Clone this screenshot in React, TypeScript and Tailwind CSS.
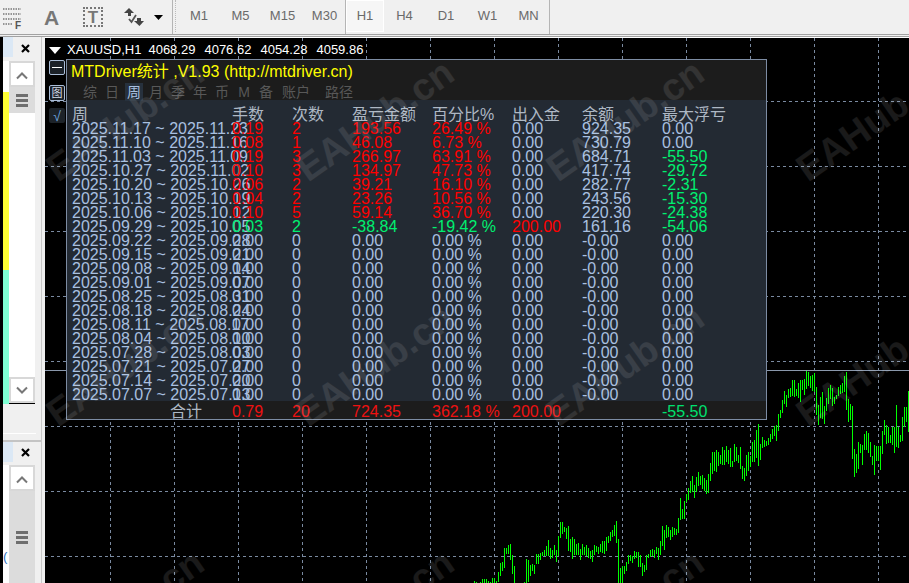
import React from 'react';

type Row = { week: string; lots: string; count: string; pl: string; pct: string; io: string; bal: string; dd: string };

const red = 'text-[#ff0000]';
const green = 'text-[#00f070]';
const steel = 'text-[#a9c0e0]';

const zero = { lots: '0.00', count: '0', pl: '0.00', pct: '0.00 %', io: '0.00', bal: '-0.00', dd: '0.00' };

const rows: Row[] = [
  { week: '2025.11.17 ~ 2025.11.23', lots: '0.19', count: '2', pl: '193.56', pct: '26.49 %', io: '0.00', bal: '924.35', dd: '0.00' },
  { week: '2025.11.10 ~ 2025.11.16', lots: '0.08', count: '1', pl: '46.08', pct: '6.73 %', io: '0.00', bal: '730.79', dd: '0.00' },
  { week: '2025.11.03 ~ 2025.11.09', lots: '0.19', count: '3', pl: '266.97', pct: '63.91 %', io: '0.00', bal: '684.71', dd: '-55.50' },
  { week: '2025.10.27 ~ 2025.11.02', lots: '0.10', count: '3', pl: '134.97', pct: '47.73 %', io: '0.00', bal: '417.74', dd: '-29.72' },
  { week: '2025.10.20 ~ 2025.10.26', lots: '0.06', count: '2', pl: '39.21', pct: '16.10 %', io: '0.00', bal: '282.77', dd: '-2.31' },
  { week: '2025.10.13 ~ 2025.10.19', lots: '0.04', count: '2', pl: '23.26', pct: '10.56 %', io: '0.00', bal: '243.56', dd: '-15.30' },
  { week: '2025.10.06 ~ 2025.10.12', lots: '0.10', count: '5', pl: '59.14', pct: '36.70 %', io: '0.00', bal: '220.30', dd: '-24.38' },
  { week: '2025.09.29 ~ 2025.10.05', lots: '0.03', count: '2', pl: '-38.84', pct: '-19.42 %', io: '200.00', bal: '161.16', dd: '-54.06' },
  { week: '2025.09.22 ~ 2025.09.28', ...zero },
  { week: '2025.09.15 ~ 2025.09.21', ...zero },
  { week: '2025.09.08 ~ 2025.09.14', ...zero },
  { week: '2025.09.01 ~ 2025.09.07', ...zero },
  { week: '2025.08.25 ~ 2025.08.31', ...zero },
  { week: '2025.08.18 ~ 2025.08.24', ...zero },
  { week: '2025.08.11 ~ 2025.08.17', ...zero },
  { week: '2025.08.04 ~ 2025.08.10', ...zero },
  { week: '2025.07.28 ~ 2025.08.03', ...zero },
  { week: '2025.07.21 ~ 2025.07.27', ...zero },
  { week: '2025.07.14 ~ 2025.07.20', ...zero },
  { week: '2025.07.07 ~ 2025.07.13', ...zero },
];

// sign colour for a cell: profit red, loss green, zero steel
const tone = (v: string) => {
  const n = parseFloat(v);
  if (n > 0) return red;
  if (n < 0) return green;
  return steel;
};

// [x, top, bottom] read off 3x crops, x0/y0 is the crop origin
const seg = (x0: number, y0: number, bars: number[][]) =>
  bars.map(([z, t, b]) => `M${x0 + z / 3 + 0.5} ${y0 + t / 3}V${y0 + b / 3}`).join('');

// the stretch between crops, y already in page pixels
const middle = [
  [0, 450, 472], [6, 452, 466], [12, 455, 464], [18, 447, 465], [24, 450, 465], [30, 446, 462], [36, 450, 464], [42, 448, 467],
  [48, 461, 467], [54, 444, 462], [60, 447, 461], [66, 455, 463], [72, 447, 469], [78, 466, 479], [84, 468, 481], [90, 455, 476],
  [96, 452, 471], [102, 456, 467], [108, 442, 462], [114, 440, 462], [120, 430, 458], [126, 424, 466],
].map(([z, t, b]) => [z, t * 3, b * 3]);

const candles =
  seg(470, 500, [
    [12, 243, 270], [18, 246, 270], [30, 247, 270], [36, 238, 270], [42, 237, 270], [48, 237, 270], [54, 242, 270], [60, 246, 270],
    [66, 234, 270], [72, 235, 270], [78, 243, 270], [84, 216, 246], [90, 189, 228], [96, 186, 213], [102, 144, 204], [108, 144, 162],
    [114, 135, 162], [120, 132, 180], [126, 165, 222], [132, 198, 270], [162, 246, 270], [168, 177, 270], [174, 180, 246], [180, 195, 228],
    [186, 192, 213], [192, 195, 222], [198, 162, 192], [204, 162, 192], [210, 159, 180], [216, 156, 168], [222, 150, 168], [228, 138, 168],
    [234, 120, 168], [240, 144, 177], [246, 150, 174], [252, 135, 165], [258, 150, 186], [264, 108, 168], [270, 66, 114], [276, 66, 102],
    [282, 81, 96], [288, 84, 117], [294, 78, 153], [300, 117, 156], [306, 111, 177], [312, 117, 165], [318, 132, 165], [324, 129, 165],
    [330, 147, 180], [336, 132, 165], [342, 141, 165], [348, 135, 168], [354, 144, 174], [360, 153, 177], [366, 150, 186], [372, 135, 165],
    [378, 138, 156], [384, 141, 162], [390, 132, 156], [396, 123, 159], [402, 123, 162], [408, 111, 153], [414, 108, 129], [420, 96, 123],
    [426, 90, 111], [432, 75, 108], [438, 63, 129], [444, 117, 270],
  ]) +
  seg(620, 460, [
    [0, 324, 369], [6, 318, 369], [12, 318, 342], [18, 306, 333], [24, 285, 312], [30, 285, 303], [36, 288, 309], [42, 273, 297],
    [48, 276, 294], [54, 276, 321], [60, 285, 321], [66, 309, 348], [72, 315, 336], [78, 285, 330], [84, 282, 294], [90, 270, 291],
    [96, 267, 288], [102, 270, 294], [108, 261, 282], [114, 264, 300], [120, 243, 285], [126, 198, 258], [132, 210, 270], [138, 195, 234],
    [144, 201, 231], [150, 210, 240], [156, 201, 231], [162, 204, 225], [168, 207, 225], [174, 174, 219], [180, 114, 180], [186, 147, 177],
    [192, 123, 177], [198, 102, 126], [204, 84, 120], [210, 63, 99], [216, 48, 96], [222, 75, 114], [228, 51, 96], [234, 36, 78],
    [240, 48, 75], [246, 45, 87], [252, 54, 93], [258, 60, 102], [264, 42, 99], [270, 9, 63], [276, -24, 42], [282, -24, 33],
  ]) +
  seg(716, 0, middle) +
  seg(760, 365, [
    [0, 237, 285], [6, 216, 249], [12, 225, 246], [18, 228, 243], [24, 219, 240], [30, 207, 231], [36, 192, 222], [42, 183, 213],
    [48, 180, 228], [54, 147, 198], [60, 135, 159], [66, 105, 144], [72, 78, 117], [78, 90, 126], [84, 72, 99], [90, 69, 96],
    [96, 45, 93], [102, 45, 96], [108, 72, 93], [114, 54, 99], [120, 45, 111], [126, 45, 75], [132, 42, 90], [138, 18, 72],
    [144, 21, 63], [150, 33, 69], [156, 30, 78], [162, 24, 81], [168, 66, 150], [174, 120, 180], [180, 96, 159], [186, 81, 162],
    [192, 123, 177], [198, 99, 138], [204, 69, 117], [210, 60, 102], [216, 69, 123], [222, 96, 117], [228, 90, 102], [234, 66, 93],
    [240, 60, 87], [246, 54, 84], [252, 33, 81], [258, 21, 135], [264, 102, 171], [270, 117, 165], [276, 123, 282], [282, 252, 336],
    [288, 267, 324], [294, 231, 312], [300, 237, 264], [306, 240, 300], [312, 207, 255], [318, 198, 255], [324, 204, 264], [330, 231, 276],
    [336, 273, 300], [342, 240, 330], [348, 243, 288], [354, 243, 288], [360, 243, 315], [366, 198, 267], [372, 165, 210], [378, 180, 237],
    [384, 186, 234], [390, 210, 234], [396, 186, 240], [402, 186, 264], [408, 120, 246], [414, 186, 249], [420, 210, 231], [426, 156, 228],
    [432, 126, 186], [438, 126, 171], [444, 78, 201],
  ]);

const gridX = [110, 174, 238, 302, 366, 430, 494, 558, 622, 686, 750, 814, 878];
const gridY = [101, 166, 231, 296, 361, 426, 491, 556];

const marks = [120, 365, 610].flatMap((y) => [125, 375, 625, 875].map((x) => ({ x, y })));

const ScrollGrip = () => (
  <div className="flex flex-col gap-[2px] w-[12px]">
    <div className="h-[3px] bg-[#6e6e6e]" />
    <div className="h-[3px] bg-[#6e6e6e]" />
    <div className="h-[3px] bg-[#6e6e6e]" />
  </div>
);

const Chevron = ({ down }: { down?: boolean }) => (
  <svg width="12" height="8" viewBox="0 0 12 8" className={down ? '' : 'mt-[3px]'}>
    <path d={down ? 'M1 1.5L6 6.5L11 1.5' : 'M1 6.5L6 1.5L11 6.5'} fill="none" stroke="#777" strokeWidth="2" />
  </svg>
);

const ScrollBtn = ({ down }: { down?: boolean }) => (
  <div className="h-[26px] shrink-0 bg-white border-2 border-[#d8d8d8] flex items-center justify-center">
    <Chevron down={down} />
  </div>
);

const PaneHeader = ({ offset }: { offset?: boolean }) => (
  <div className="h-[20px] flex shrink-0">
    <div className="w-[10px] bg-[#dbe8f5]" />
    <div className={`flex-1 flex items-center justify-center pr-[3px] ${offset ? 'pt-[2px]' : ''}`}>
      <svg width="9" height="9" viewBox="0 0 9 9">
        <path d="M1 1L8 8M8 1L1 8" stroke="#000" strokeWidth="2.2" />
      </svg>
    </div>
  </div>
);

const TF = ({ label, w, active }: { label: string; w: string; active?: boolean }) => (
  <div
    className={`${w} h-[32px] flex items-center justify-center text-[13px] text-[#6a6a6a] ${
      active ? 'bg-[#f6f6f6] border border-white' : ''
    }`}
  >
    {label}
  </div>
);

const Cell = ({ w, className, children }: { w: string; className?: string; children: React.ReactNode }) => (
  <div className={`${w} shrink-0 whitespace-nowrap ${className ?? ''}`}>{children}</div>
);

const tabs = ['综', '日', '周', '月', '季', '年', '币', 'M', '备'];

const App = () => {
  return (
    <div className="w-[909px] h-[583px] overflow-hidden flex flex-col bg-[#f0f0f0] font-['Liberation_Sans','Noto_Sans_CJK_SC',sans-serif]">
      {/* Toolbar */}
      <div className="h-[37px] shrink-0 flex items-start border-b-[3px] border-[#a2a2a2] border-double">
        <div className="w-[173px] h-[34px] flex items-center shrink-0 border-r border-[#b5b5b5]">
          <svg width="20" height="24" viewBox="0 0 20 24" className="ml-[3px] shrink-0">
            <path d="M0 4H18M0 9H18M0 14H18M0 19H10" stroke="#777" strokeWidth="1.5" strokeDasharray="1.5 1" />
            <text x="12" y="24" fontSize="10" fontWeight="700" fill="#555">F</text>
          </svg>
          <span className="ml-[21px] w-[14px] text-[21px] font-bold text-[#777] leading-none">A</span>
          <div className="ml-[25px] w-[20px] h-[20px] border-2 border-dotted border-[#777] flex items-center justify-center text-[17px] font-bold text-[#777] leading-none">
            T
          </div>
          <svg width="22" height="20" viewBox="0 0 22 20" className="ml-[20px] shrink-0">
            <path d="M1 6L6 1L11 6Z" fill="#444" />
            <path d="M5 6H8V9H5Z" fill="#444" />
            <path d="M6 12L8.5 15L13 8" fill="none" stroke="#555" strokeWidth="1.8" />
            <path d="M11 14L16.5 19L21 14Z" fill="#444" />
            <path d="M14 11H18V14H14Z" fill="#444" />
          </svg>
          <svg width="9" height="5" viewBox="0 0 9 5" className="ml-[9px] shrink-0">
            <path d="M0 0H9L4.5 5Z" fill="#000" />
          </svg>
        </div>
        <div className="w-[3px] h-[32px] ml-[2px] border-l border-dotted border-[#bbb]" />
        <TF label="M1" w="w-[42px]" />
        <TF label="M5" w="w-[41px]" />
        <TF label="M15" w="w-[43px]" />
        <TF label="M30" w="w-[41px]" />
        <div className="w-px h-[34px] bg-[#b5b5b5]" />
        <TF label="H1" w="w-[38px]" active />
        <TF label="H4" w="w-[41px]" />
        <TF label="D1" w="w-[42px]" />
        <TF label="W1" w="w-[41px]" />
        <TF label="MN" w="w-[41px]" />
        <div className="w-px h-[34px] bg-[#b5b5b5]" />
      </div>

      <div className="flex-1 flex min-h-0">
        {/* Left docked panes */}
        <div className="w-[45px] shrink-0 flex">
          <div className="w-[3px] bg-black" />
          <div className="w-[38px] flex flex-col">
            <div className="h-[367px] flex flex-col shrink-0">
              <PaneHeader offset />
              <div className="flex flex-1 min-h-0 pt-[4px]">
                <div className="w-[6px] flex flex-col">
                  <div className="h-[31px] bg-white" />
                  <div className="h-[178px] bg-[#ffff33]" />
                  <div className="flex-1 bg-[#7fffd4]" />
                </div>
                <div className="w-[26px] flex flex-col border-b border-black">
                  <ScrollBtn />
                  <div className="h-[26px] bg-[#dcdcdc] flex items-center justify-center shrink-0">
                    <ScrollGrip />
                  </div>
                  <div className="flex-1 bg-white" />
                  <ScrollBtn down />
                </div>
              </div>
            </div>
            <div className="h-[30px] shrink-0 border-b border-white mr-[5px]" />
            <div className="h-[8px] shrink-0 border-b-2 border-[#c4c4c4]" />
            <div className="flex-1 flex flex-col min-h-0">
              <PaneHeader />
              <div className="flex flex-1 min-h-0 pt-[3px]">
                <div className="w-[6px] bg-white text-[#2a6fc0] text-[13px] leading-none flex items-end pb-[20px] overflow-hidden">(</div>
                <div className="w-[26px] flex flex-col">
                  <ScrollBtn />
                  <div className="flex-1 bg-[#dcdcdc] flex items-center justify-center">
                    <ScrollGrip />
                  </div>
                </div>
              </div>
            </div>
          </div>
          <div className="w-[1px] bg-[#c8c8c8]" />
          <div className="w-[3px]" />
        </div>

        {/* Chart */}
        <div className="flex-1 relative bg-black overflow-hidden border-t border-white">
          <svg className="absolute left-0 top-0" width="864" height="545" viewBox="45 38 864 545">
            {gridX.map((x) => (
              <path key={x} d={`M${x + 0.5} 38V583`} stroke="#7a8aa0" strokeDasharray="3 3" />
            ))}
            {gridY.map((y) => (
              <path key={y} d={`M45 ${y + 0.5}H909`} stroke="#7a8aa0" strokeDasharray="3 3" />
            ))}
            <path d="M45 370.5H909" stroke="#8a98ac" />
            <path d={candles} stroke="#00ff00" fill="none" shapeRendering="crispEdges" />
          </svg>

          {/* Symbol line */}
          <div className="absolute left-[4px] top-[3px] flex items-center text-[13px] leading-[18px] text-white whitespace-nowrap pr-[1px]">
            <svg width="12" height="7" viewBox="0 0 12 7" className="mr-[6px]">
              <path d="M0 0H12L6 7Z" fill="#fff" />
            </svg>
            <span>XAUUSD,H1</span>
            <div className="ml-[7px] flex gap-[9px]">
              <span>4068.29</span>
              <span>4076.62</span>
              <span>4054.28</span>
              <span>4059.86</span>
            </div>
          </div>

          {/* Side buttons of the stats panel */}
          <div className="absolute left-[4px] top-[22px] w-[16px] h-[15px] rounded-[2px] border border-[#a9bcd6] bg-[#1b2128] flex items-center justify-center">
            <div className="w-[10px] h-px bg-white" />
          </div>
          <div className="absolute left-[4px] top-[47px] w-[16px] h-[16px] rounded-[2px] border border-[#a9bcd6] bg-[#1b2128] flex items-center justify-center text-[11px] leading-none text-[#d5dde8]">
            图
          </div>
          <div className="absolute left-[4px] top-[70px] w-[16px] h-[15px] rounded-[2px] bg-[#1d2329] flex items-center justify-center text-[14px] leading-none text-[#6aa0d8]">
            √
          </div>

          {/* Stats panel */}
          <div className="absolute left-[21px] top-[21px] w-[701px] h-[361px] border border-[#7d8ca3] flex flex-col bg-[#232a33] text-[16px]">
            <div className="h-[40px] shrink-0 bg-[#1c1c1c] flex flex-col">
              <div className="h-[23px] pl-[4px] leading-[24px] text-[#ffff00] whitespace-nowrap">
                MTDriver统计 ,V1.93 (http://mtdriver.cn)
              </div>
              <div className="flex pl-[12px] text-[14px] leading-[18px] text-[#585858]">
                {tabs.map((t) => (
                  <div key={t} className="w-[22px] flex justify-center">
                    <span className={t === '周' ? 'w-[18px] text-center bg-[#27313d] text-[#a9c0e0]' : ''}>{t}</span>
                  </div>
                ))}
                <div className="ml-[5px] w-[43px]">账户</div>
                <div>路径</div>
              </div>
            </div>

            <div className="flex-1 min-h-0 pl-[5px]">
              <div className="flex h-[22px] items-end text-[#aeb8c4] leading-[14px]">
                <Cell w="w-[160px]">周</Cell>
                <Cell w="w-[60px]">手数</Cell>
                <Cell w="w-[60px]">次数</Cell>
                <Cell w="w-[80px]">盈亏金额</Cell>
                <Cell w="w-[80px]">百分比%</Cell>
                <Cell w="w-[70px]">出入金</Cell>
                <Cell w="w-[80px]">余额</Cell>
                <Cell w="w-[80px]">最大浮亏</Cell>
              </div>
              {rows.map((r) => (
                <div key={r.week} className="flex h-[14px] leading-[14px]">
                  <Cell w="w-[160px]" className={steel}>{r.week}</Cell>
                  <Cell w="w-[60px]" className={tone(r.pl)}>{r.lots}</Cell>
                  <Cell w="w-[60px]" className={tone(r.pl)}>{r.count}</Cell>
                  <Cell w="w-[80px]" className={tone(r.pl)}>{r.pl}</Cell>
                  <Cell w="w-[80px]" className={tone(r.pct)}>{r.pct}</Cell>
                  <Cell w="w-[70px]" className={tone(r.io)}>{r.io}</Cell>
                  <Cell w="w-[80px]" className={steel}>{r.bal}</Cell>
                  <Cell w="w-[80px]" className={tone(r.dd)}>{r.dd}</Cell>
                </div>
              ))}
            </div>

            <div className="h-[18px] shrink-0 bg-[#1c1c1c] pl-[5px] flex leading-[22px]">
              <Cell w="w-[160px]" className="pl-[98px] text-[#aeb8c4]">合计</Cell>
              <Cell w="w-[60px]" className="text-[#ee1111]">0.79</Cell>
              <Cell w="w-[60px]" className="text-[#ee1111]">20</Cell>
              <Cell w="w-[80px]" className="text-[#ee1111]">724.35</Cell>
              <Cell w="w-[80px]" className="text-[#ee1111]">362.18 %</Cell>
              <Cell w="w-[150px]" className="text-[#ee1111]">200.00</Cell>
              <Cell w="w-[80px]" className="text-[#00e070]">-55.50</Cell>
            </div>
          </div>

          {/* Watermark */}
          {marks.map((m) => (
            <div
              key={`${m.x}-${m.y}`}
              className="absolute font-bold text-[38px] leading-none whitespace-nowrap text-white/10 -rotate-[35deg] -translate-x-1/2 -translate-y-1/2 pointer-events-none"
              style={{ left: m.x - 45, top: m.y - 38 }}
            >
              EAHub.cn
            </div>
          ))}
        </div>
      </div>
    </div>
  );
};

export default App;
